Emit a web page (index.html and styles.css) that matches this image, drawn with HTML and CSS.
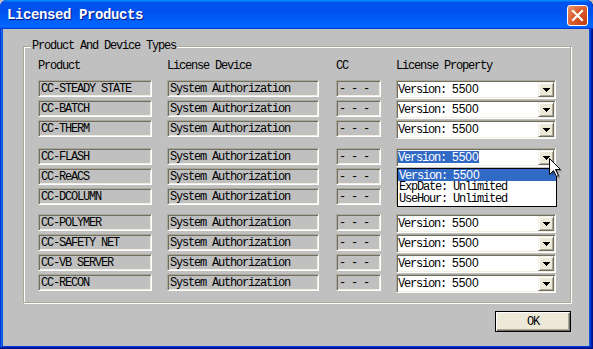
FILE: index.html
```html
<!DOCTYPE html>
<html>
<head>
<meta charset="utf-8">
<title>Licensed Products</title>
<link rel="stylesheet" href="styles.css">
</head>
<body>
<div class="window">
  <div class="titlebar">
    <span class="title">Licensed Products</span>
    <button class="close" aria-label="Close">
      <svg width="19" height="19" viewBox="0 0 19 19"><path d="M5 5 L14 14 M14 5 L5 14" stroke="#fff" stroke-width="2.2" stroke-linecap="square" fill="none"/></svg>
    </button>
  </div>
  <div class="client">
    <div class="group">
      <span class="legend">Product And Device Types</span>
      <div class="row header">
        <span>Product</span><span>License Device</span><span class="cc-col">CC</span><span>License Property</span>
      </div>
      <div class="rows">
        <div class="block">
          <div class="row"><div class="field">CC-STEADY STATE</div><div class="field">System Authorization</div><div class="field cc">- - -</div><div class="combo"><span class="val">Version: <span class="num">5500</span></span><span class="drop"><svg width="7" height="4" viewBox="0 0 7 4"><path d="M0 0H7L3.5 4Z" fill="#000"/></svg></span></div></div>
          <div class="row"><div class="field">CC-BATCH</div><div class="field">System Authorization</div><div class="field cc">- - -</div><div class="combo"><span class="val">Version: <span class="num">5500</span></span><span class="drop"><svg width="7" height="4" viewBox="0 0 7 4"><path d="M0 0H7L3.5 4Z" fill="#000"/></svg></span></div></div>
          <div class="row"><div class="field">CC-THERM</div><div class="field">System Authorization</div><div class="field cc">- - -</div><div class="combo"><span class="val">Version: <span class="num">5500</span></span><span class="drop"><svg width="7" height="4" viewBox="0 0 7 4"><path d="M0 0H7L3.5 4Z" fill="#000"/></svg></span></div></div>
        </div>
        <div class="block block-mid">
          <div class="row"><div class="field">CC-FLASH</div><div class="field">System Authorization</div><div class="field cc">- - -</div><div class="combo open"><span class="val selected">Version: <span class="num">5500</span></span><span class="drop"><svg width="7" height="4" viewBox="0 0 7 4"><path d="M0 0H7L3.5 4Z" fill="#000"/></svg></span>
            <ul class="list">
              <li class="active">Version: <span class="num">5500</span></li>
              <li>ExpDate: Unlimited</li>
              <li>UseHour: Unlimited</li>
            </ul>
          </div></div>
          <div class="row"><div class="field">CC-ReACS</div><div class="field">System Authorization</div><div class="field cc">- - -</div><div class="combo"></div></div>
          <div class="row"><div class="field">CC-DCOLUMN</div><div class="field">System Authorization</div><div class="field cc">- - -</div><div class="combo"></div></div>
        </div>
        <div class="block block-last">
          <div class="row"><div class="field">CC-POLYMER</div><div class="field">System Authorization</div><div class="field cc">- - -</div><div class="combo"><span class="val">Version: <span class="num">5500</span></span><span class="drop"><svg width="7" height="4" viewBox="0 0 7 4"><path d="M0 0H7L3.5 4Z" fill="#000"/></svg></span></div></div>
          <div class="row"><div class="field">CC-SAFETY NET</div><div class="field">System Authorization</div><div class="field cc">- - -</div><div class="combo"><span class="val">Version: <span class="num">5500</span></span><span class="drop"><svg width="7" height="4" viewBox="0 0 7 4"><path d="M0 0H7L3.5 4Z" fill="#000"/></svg></span></div></div>
          <div class="row"><div class="field">CC-VB SERVER</div><div class="field">System Authorization</div><div class="field cc">- - -</div><div class="combo"><span class="val">Version: <span class="num">5500</span></span><span class="drop"><svg width="7" height="4" viewBox="0 0 7 4"><path d="M0 0H7L3.5 4Z" fill="#000"/></svg></span></div></div>
          <div class="row"><div class="field">CC-RECON</div><div class="field">System Authorization</div><div class="field cc">- - -</div><div class="combo"><span class="val">Version: <span class="num">5500</span></span><span class="drop"><svg width="7" height="4" viewBox="0 0 7 4"><path d="M0 0H7L3.5 4Z" fill="#000"/></svg></span></div></div>
        </div>
      </div>
    </div>
    <div class="footer">
      <button class="ok">OK</button>
    </div>
  </div>
  <svg class="cursor" width="16" height="23" viewBox="0 0 16 23">
    <path d="M2.5 2.5V18.5L6.5 14.5L9.5 20.5L11.5 19.5L8.5 13.5H13.5Z" fill="rgba(0,0,0,0.28)"/>
    <path d="M0.5 0.5V16.5L4.5 12.5L7.5 18.5L9.5 17.5L6.5 11.5H11.5Z" fill="#fff" stroke="#000" stroke-width="1" stroke-linejoin="miter"/>
  </svg>
</div>
</body>
</html>
```
FILE: styles.css
```css
* { box-sizing: border-box; }
html, body { margin: 0; padding: 0; }
body {
  width: 593px;
  height: 349px;
  overflow: hidden;
  background: #c0c0c0;
  font-family: "Liberation Mono", "Courier New", monospace;
  font-size: 12px;
  letter-spacing: -1.2px;
  color: #000;
}
.window {
  position: relative;
  width: 593px;
  height: 349px;
  display: flex;
  flex-direction: column;
  background: #0855dd;
  border-radius: 7px 7px 0 0;
  overflow: hidden;
  box-shadow: inset -1px -1px #00138c, inset 1px 1px #0831d9, inset -2px -2px #001ea0, inset 2px 2px #166aee, inset -3px -3px #003bda;
}
.titlebar {
  flex: none;
  height: 29px;
  display: flex;
  justify-content: space-between;
  align-items: flex-start;
  padding: 0 5px 0 7px;
  border-radius: 7px 7px 0 0;
  background: linear-gradient(180deg, #0997ff, #0053ee 8%, #0050ee 40%, #0066ff 88%, #0066ff 93%, #005bff 95%, #003dd7 96%, #003dd7);
}
.title {
  margin-top: 8px;
  color: #fff;
  font-weight: bold;
  font-size: 14px;
  letter-spacing: -0.4px;
  line-height: 14px;
  text-shadow: 1px 1px 0 #0a1883;
}
.close {
  margin-top: 5px;
  width: 21px;
  height: 21px;
  padding: 0;
  border: 1px solid #fff;
  border-radius: 3px;
  display: flex;
  align-items: center;
  justify-content: center;
  background: radial-gradient(circle at 90% 90%, #c23f0e 0%, #d85a2a 55%, #e2764c 75%, #eb9473 100%);
}
.client {
  flex: 1;
  margin: 0 4px 3px 3px;
  background: #c0c0c0;
  padding: 17px 0 0 20px;
  display: flex;
  flex-direction: column;
  align-items: flex-start;
}
.group {
  position: relative;
  width: 548px;
  height: 257px;
  border: 1px solid #aca899;
  box-shadow: inset 1px 1px 0 #fff, 1px 1px 0 #fff;
  padding: 13px 0 0 14px;
}
.legend {
  position: absolute;
  top: -7px;
  left: 7px;
  padding: 0 1px;
  background: #c0c0c0;
  line-height: 12px;
  white-space: nowrap;
}
.row {
  display: grid;
  grid-template-columns: 114px 152px 47px 160px;
  column-gap: 15px;
  align-items: start;
  height: 20px;
}
.row.header {
  height: 12px;
  line-height: 12px;
  white-space: nowrap;
}
.cc-col { margin-left: 2px; }
.rows {
  margin-top: 8px;
  display: flex;
  flex-direction: column;
}
.block { display: flex; flex-direction: column; }
.block-mid { margin-top: 8px; }
.block-last { margin-top: 6px; }
.field {
  height: 17px;
  border: 1px solid;
  border-color: #aca899 #fff #fff #aca899;
  box-shadow: inset 1px 1px 0 #716f64, inset -1px -1px 0 #f1efe2;
  padding-left: 2px;
  line-height: 16px;
  white-space: nowrap;
  overflow: hidden;
}
.field.cc { margin-left: 2px; width: 45px; }
.combo {
  position: relative;
  height: 19px;
  background: #fff;
  border: 1px solid;
  border-color: #aca899 #fff #fff #aca899;
  box-shadow: inset 1px 1px 0 #716f64, inset -1px -1px 0 #f1efe2;
  padding: 1px;
  display: flex;
  align-items: flex-start;
}
.val {
  line-height: 15px;
  white-space: nowrap;
}
.val.selected {
  margin-top: 1px;
  line-height: 12px;
  height: 12px;
  background: #316ac5;
  color: #fff;
}
.num {
  font-family: "Liberation Sans", Arial, sans-serif;
  letter-spacing: 0;
}
.drop {
  margin-left: auto;
  width: 16px;
  height: 15px;
  background: #ece9d8;
  border: 1px solid;
  border-color: #f1efe2 #716f64 #716f64 #f1efe2;
  box-shadow: inset 1px 1px 0 #fff, inset -1px -1px 0 #aca899;
  display: flex;
  align-items: center;
  justify-content: center;
}
.drop svg { display: block; shape-rendering: crispEdges; }
.list {
  position: absolute;
  z-index: 5;
  left: 0;
  top: 19px;
  width: 160px;
  margin: 0;
  padding: 0 0 1px 0;
  list-style: none;
  background: #fff;
  border: 1px solid #000;
}
.list li {
  height: 12px;
  line-height: 12px;
  padding-left: 1px;
  white-space: nowrap;
}
.list li.active {
  background: #316ac5;
  color: #fff;
}
.footer {
  width: 548px;
  margin-top: 8px;
  display: flex;
  justify-content: flex-end;
}
.ok {
  width: 76px;
  height: 21px;
  padding: 0;
  font: inherit;
  letter-spacing: -1.2px;
  color: #000;
  background: #ece9d8;
  border: 1px solid #000;
  box-shadow: inset 1px 1px 0 #fff, inset -1px -1px 0 #716f64, inset -2px -2px 0 #aca899;
}
.cursor {
  position: absolute;
  left: 549px;
  top: 158px;
  z-index: 10;
}
```
